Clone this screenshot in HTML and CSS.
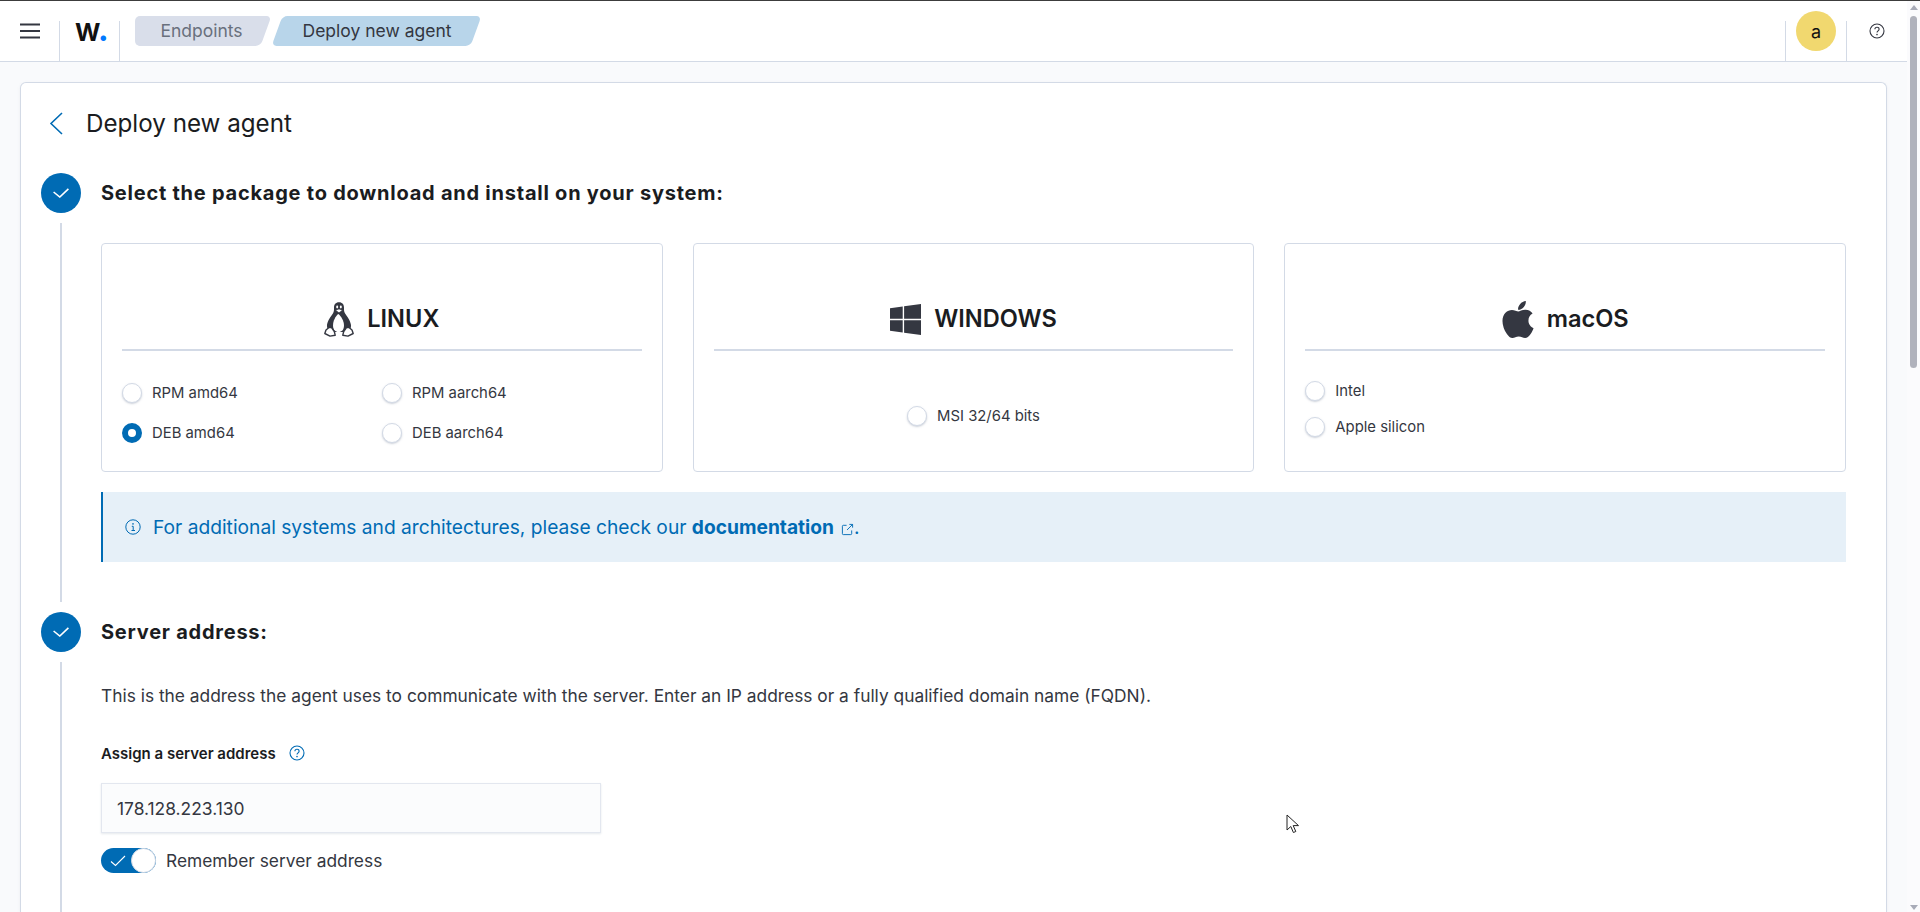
FILE: index.html
```html
<!DOCTYPE html>
<html lang="en">
<head>
<meta charset="utf-8">
<title>Deploy new agent</title>
<link rel="stylesheet" href="styles.css">
</head>
<body>
<div class="app">
  <div class="main">
    <header class="header">
      <div class="sec sec-menu">
        <svg class="ico-menu" viewBox="0 0 20 16" width="20" height="16"><path d="M0 1.5h20M0 8h20M0 14.5h20" stroke="#343741" stroke-width="2" fill="none"/></svg>
      </div>
      <div class="sec sec-logo"><span class="logo">W<span class="logo-dot">.</span></span></div>
      <nav class="crumbs">
        <span class="crumb crumb-first">Endpoints</span>
        <span class="crumb crumb-last">Deploy new agent</span>
      </nav>
      <div class="header-right">
        <div class="sec sec-avatar"><span class="avatar">a</span></div>
        <div class="sec sec-help">
          <svg viewBox="0 0 16 16" width="16" height="16" fill="none"><circle cx="8" cy="8" r="7" stroke="#343741" stroke-width="1.1"/><path d="M5.9 6.3c0-1.2 1-2 2.1-2s2.1.8 2.1 1.9c0 1.7-2.1 1.6-2.1 3.4" stroke="#343741" stroke-width="1.1"/><circle cx="8" cy="11.6" r=".8" fill="#343741"/></svg>
        </div>
      </div>
    </header>

    <main class="panel">
      <div class="title-row">
        <svg class="back" viewBox="0 0 14 23" width="14" height="23" fill="none"><path d="M13 1 2 11.5 13 22" stroke="#006bb4" stroke-width="1.6"/></svg>
        <h1 class="title">Deploy new agent</h1>
      </div>

      <section class="step">
        <div class="step-head">
          <span class="step-num"><svg viewBox="0 0 16 10" width="16" height="10" fill="none"><path d="M.6 4 6.8 9 15.4.8" stroke="#fff" stroke-width="1.6"/></svg></span>
          <h2 class="step-title">Select the package to download and install on your system:</h2>
        </div>
        <div class="step-body step-body-1">
          <div class="cards">
            <div class="card">
              <div class="card-head">
                <svg class="os-ico" viewBox="0 0 30 35" width="30" height="35">
                  <path d="M15 .3c-3.400 0-5 2.300-5 5.300 0 2.400.2 3.800-1.100 5.800C7.300 14 3.500 18.400 3 23c-.3 2.700 1 4.800 3 7h18c2-2.200 3.300-4.300 3-7-.5-4.600-4.300-9-5.900-11.600-1.300-2-1.100-3.400-1.100-5.800 0-3-1.600-5.300-5-5.300z" fill="#343741"/>
                  <path d="M14.300 12c-2.600 1.800-5.300 7-5.300 11.500 0 4.400 2.300 6.500 5.500 6.500s5.500-2.100 5.500-6.500c0-4.500-3.100-9.700-5.700-11.500z" fill="#fff"/>
                  <ellipse cx="13.200" cy="5" rx="1" ry="1.400" fill="#fff"/><ellipse cx="16.800" cy="5" rx="1" ry="1.400" fill="#fff"/>
                  <path d="M11.600 8.300 15 6.900l3.400 1.400-3.400 2.500z" fill="#fff" stroke="#343741" stroke-width=".6"/>
                  <path d="M5 25.500 2 28 .8 31.500l5.200 2.600 5.200-.9-.9-3.700L7.500 25.500z" fill="#fff" stroke="#343741" stroke-width="1.400" stroke-linejoin="round"/>
                  <path d="M25 25.500l3 2.500 1.200 3.500-5.200 2.600-5.200-.9.900-3.700L22.500 25.500z" fill="#fff" stroke="#343741" stroke-width="1.400" stroke-linejoin="round"/>
                </svg>
                <span class="os-name">LINUX</span>
              </div>
              <div class="opts opts-grid">
                <label class="opt"><span class="radio"></span>RPM amd64</label>
                <label class="opt"><span class="radio"></span>RPM aarch64</label>
                <label class="opt"><span class="radio radio-on"></span>DEB amd64</label>
                <label class="opt"><span class="radio"></span>DEB aarch64</label>
              </div>
            </div>
            <div class="card">
              <div class="card-head">
                <svg class="os-ico" viewBox="0 32 448 448" width="31" height="31"><path fill="#343741" d="M0 93.700l183.600-25.300v177.400H0V93.700zm0 324.600l183.600 25.300V268.400H0v149.900zm203.800 28L448 480V268.400H203.800v177.900zm0-380.600v180.100H448V32L203.800 65.700z"/></svg>
                <span class="os-name">WINDOWS</span>
              </div>
              <div class="opts opts-center">
                <label class="opt"><span class="radio"></span>MSI 32/64 bits</label>
              </div>
            </div>
            <div class="card">
              <div class="card-head">
                <svg class="os-ico" viewBox="0 32 384 448" width="32" height="37"><path fill="#343741" d="M318.700 268.700c-.2-36.700 16.400-64.400 50-84.800-18.800-26.900-47.200-41.700-84.700-44.600-35.500-2.800-74.300 20.700-88.500 20.700-15 0-49.400-19.700-76.400-19.700C63.300 141.200 4 184.800 4 273.500q0 39.300 14.400 81.200c12.800 36.700 59 126.700 107.200 125.200 25.200-.6 43-17.900 75.800-17.900 31.800 0 48.300 17.900 76.400 17.900 48.600-.7 90.400-82.500 102.600-119.300-65.200-30.700-61.700-90-61.700-91.900zm-56.600-164.200c27.300-32.400 24.800-61.900 24-72.500-24.100 1.400-52 16.400-67.900 34.900-17.500 19.800-27.800 44.300-25.600 71.900 26.100 2 49.900-11.400 69.500-34.300z"/></svg>
                <span class="os-name">macOS</span>
              </div>
              <div class="opts opts-col">
                <label class="opt"><span class="radio"></span>Intel</label>
                <label class="opt"><span class="radio"></span>Apple silicon</label>
              </div>
            </div>
          </div>
          <div class="callout">
            <svg class="callout-ico" viewBox="0 0 16 16" width="16" height="16" fill="none"><circle cx="8" cy="8" r="7.2" stroke="#006bb4"/><path d="M6.800 7.300H8.200V11.500M6.500 11.500H10" stroke="#006bb4"/><circle cx="8" cy="4.900" r=".8" fill="#006bb4"/></svg>
            <span>For additional systems and architectures, please check our <a class="doc-link">documentation<svg class="ext" viewBox="0 0 14 14" width="13" height="13" fill="none"><path d="M6 2.500H2.500a1 1 0 0 0-1 1V11.500a1 1 0 0 0 1 1H10.500a1 1 0 0 0 1-1V8M6.500 7.500 12.500 1.500M9 1.500h3.500V5" stroke="#006bb4"/></svg></a>.</span>
          </div>
        </div>
      </section>

      <section class="step">
        <div class="step-head">
          <span class="step-num"><svg viewBox="0 0 16 10" width="16" height="10" fill="none"><path d="M.6 4 6.8 9 15.4.8" stroke="#fff" stroke-width="1.6"/></svg></span>
          <h2 class="step-title">Server address:</h2>
        </div>
        <div class="step-body step-body-2">
          <p class="desc">This is the address the agent uses to communicate with the server. Enter an IP address or a fully qualified domain name (FQDN).</p>
          <div class="field-label">
            <span>Assign a server address</span>
            <svg viewBox="0 0 16 16" width="16" height="16" fill="none"><circle cx="8" cy="8" r="7" stroke="#006bb4" stroke-width="1.100"/><path d="M5.900 6.300c0-1.200 1-2 2.100-2s2.100.8 2.100 1.900c0 1.700-2.100 1.600-2.100 3.400" stroke="#006bb4" stroke-width="1.100"/><circle cx="8" cy="11.600" r=".8" fill="#006bb4"/></svg>
          </div>
          <div class="input">178.128.223.130</div>
          <div class="toggle-row">
            <span class="toggle">
              <svg viewBox="0 0 16 12" width="16" height="12" fill="none"><path d="M1 6.500 5.500 10.500 15 1" stroke="#fff" stroke-width="1.100"/></svg>
              <span class="knob"></span>
            </span>
            <span>Remember server address</span>
          </div>
        </div>
      </section>
    </main>
  </div>

  <aside class="scrollbar">
    <span class="sb-up"></span>
    <span class="sb-thumb"></span>
    <span class="sb-down"></span>
  </aside>
</div>
<svg class="cursor" viewBox="0 0 14 20" width="14" height="20"><path d="M1 1v15l3.800-3.500 2.600 6 2.400-1-2.600-5.900H12.500z" fill="#fff" stroke="#222" stroke-width="1"/></svg>
</body>
</html>
```
FILE: styles.css
```css
* { box-sizing: border-box; }
html, body { margin: 0; height: 912px; overflow: hidden; }
body {
  font-family: Inter, "Liberation Sans", sans-serif;
  font-size: 16px;
  color: #343741;
  background: #f9fafc;
}
.app { display: flex; height: 912px; border-top: 1px solid #3c3c3c; }
.main { flex: 1; min-width: 0; display: flex; flex-direction: column; }

.header {
  height: 61px;
  flex: none;
  display: flex;
  background: #fff;
  border-bottom: 1px solid #d3dae6;
}
.sec { align-self: flex-end; height: 40px; display: flex; align-items: center; justify-content: center; }
.sec-menu { width: 60px; border-right: 1px solid #d3dae6; padding: 0 0 20px; }
.sec-logo { width: 60px; border-right: 1px solid #d3dae6; padding: 0 0 20px; justify-content: flex-start; padding-left: 15px; }
.logo { font-size: 24.5px; font-weight: 700; color: #111; line-height: 40px; letter-spacing: -.5px; }
.logo-dot { color: #0079ff; font-size: 30px; font-weight: 800; margin-left: -2px; }

.crumbs { display: flex; gap: 3px; margin: 15px 0 0 15px; height: 30px; }
.crumb {
  position: relative;
  z-index: 0;
  display: flex;
  align-items: center;
  justify-content: center;
  font-size: 17.5px;
  height: 30px;
  line-height: 30px;
  white-space: nowrap;
}
.crumb::before {
  content: "";
  position: absolute;
  inset: 0;
  z-index: -1;
  border-radius: 5px;
  transform: skewX(-20deg);
}
.crumb-first { width: 135px; color: #69707d; padding-right: 2px; }
.crumb-first::before { background: #d9deea; left: 6px; right: 4px; }
.crumb-first::after {
  content: "";
  position: absolute;
  z-index: -1;
  inset: 0 auto 0 0;
  width: 40px;
  border-radius: 5px 0 0 5px;
  background: #d9deea;
}
.crumb-last { width: 208px; color: #343741; }
.crumb-last::before { background: #b8d5ea; left: 4px; right: 5px; }

.header-right { margin-left: auto; display: flex; align-self: flex-end; }
.sec-avatar { width: 62px; border-left: 1px solid #d3dae6; border-right: 1px solid #d3dae6; padding-bottom: 20px; }
.avatar {
  width: 40px; height: 40px;
  border-radius: 50%;
  background: #f1d86f;
  color: #111;
  display: flex; align-items: center; justify-content: center;
  font-size: 18px;
  flex: none;
}
.sec-help { width: 60px; padding-bottom: 20px; }

.panel {
  flex: 1;
  margin: 20px 20px 0;
  background: #fff;
  border: 1px solid #d3dae6;
  border-bottom: 0;
  border-radius: 6px 6px 0 0;
  padding: 0 40px 0 20px;
  overflow: hidden;
  box-shadow: 0 1px 3px rgba(152,162,179,.15);
}
.title-row { display: flex; align-items: center; height: 40px; margin-top: 20px; padding-left: 8px; gap: 23px; }
.title { margin: 2px 0 0; font-size: 24.2px; font-weight: 400; color: #1a1c21; line-height: 40px; }
.back { flex: none; }

.step-head { display: flex; align-items: center; gap: 20px; height: 40px; margin-top: 30px; }
.step + .step .step-head { margin-top: 0; }
.step-num {
  width: 40px; height: 40px; border-radius: 50%;
  background: #006bb4;
  display: flex; align-items: center; justify-content: center;
  flex: none;
}
.step-title { margin: 0; font-size: 20px; font-weight: 700; color: #1a1c21; letter-spacing: .76px; }

.step-body { margin: 10px 0 10px 19px; border-left: 2px solid #d3dae6; padding-left: 39px; }
.step-body-1 { padding-top: 20px; padding-bottom: 40px; }
.step-body-2 { padding-top: 22px; height: 300px; }

.cards { display: grid; grid-template-columns: repeat(3, 1fr); gap: 30px; }
.card {
  height: 229px;
  border: 1px solid #d3dae6;
  border-radius: 4px;
  padding: 0 20px;
  display: flex;
  flex-direction: column;
}
.card-head {
  flex: none;
  height: 107px;
  border-bottom: 2px solid #d3dae6;
  display: flex;
  align-items: center;
  justify-content: center;
  gap: 13px;
  padding-top: 45px;
}
.os-ico { flex: none; }
.os-name { font-size: 23.6px; font-weight: 600; color: #1a1c21; line-height: 30px; }
.opts { flex: 1; font-size: 14.85px; }
.opt { display: flex; align-items: center; gap: 10px; height: 20px; white-space: nowrap; color: #343741; }
.opts-grid { display: grid; grid-template-columns: 260px 1fr; grid-auto-rows: 20px; row-gap: 20px; padding-top: 32px; }
.opts-center { display: flex; justify-content: center; padding-top: 55px; }
.opts-col { display: flex; flex-direction: column; gap: 16px; padding-top: 30px; }
.radio {
  width: 20px; height: 20px; border-radius: 50%;
  background: #fff;
  border: 1px solid #d3dae6;
  box-shadow: 0 1px 2px rgba(152,162,179,.5);
  flex: none;
}
.radio-on { border: 6px solid #006bb4; box-shadow: none; }

.callout {
  margin-top: 20px;
  height: 70px;
  display: flex;
  align-items: center;
  gap: 12px;
  background: #e6f0f8;
  border-left: 2px solid #006bb4;
  padding-left: 22px;
  color: #006bb4;
  font-size: 19.2px;
}
.callout-ico { flex: none; }
.doc-link { font-weight: 700; }
.ext { margin: 0 0 -2px 7px; }

.desc { margin: 0; font-size: 17.35px; line-height: 24px; color: #343741; }
.field-label { display: flex; align-items: center; gap: 13px; margin-top: 35px; font-size: 15px; font-weight: 600; color: #1a1c21; height: 20px; }
.input {
  margin-top: 20px;
  width: 500px;
  height: 50px;
  display: flex; align-items: center;
  padding-left: 15px;
  background: #fbfcfd;
  border: 1px solid #e3e7ef;
  box-shadow: 0 1px 2px rgba(152,162,179,.25);
  font-size: 17.4px;
  color: #343741;
}
.toggle-row { display: flex; align-items: center; gap: 10px; margin-top: 15px; height: 25px; font-size: 17.35px; }
.toggle {
  position: relative;
  width: 55px; height: 25px;
  border-radius: 13px;
  background: #006bb4;
  display: flex; align-items: center;
  padding-left: 9px;
  flex: none;
}
.knob {
  position: absolute;
  right: 0; top: 0;
  width: 25px; height: 25px;
  border-radius: 50%;
  background: #fff;
  border: 1px solid #d3dae6;
}

.scrollbar { width: 13px; flex: none; background: #fbfbfd; display: flex; flex-direction: column; align-items: center; }
.sb-up { width: 0; height: 0; border: 4px solid transparent; border-top: 0; border-bottom: 5px solid #a8abb8; margin-top: 4px; }
.sb-thumb { width: 7px; height: 352px; margin-top: 6px; background: #b0b2bc; border-radius: 4px; }
.sb-down { width: 0; height: 0; border: 4px solid transparent; border-bottom: 0; border-top: 5px solid #a8abb8; margin-top: auto; margin-bottom: 2px; }

.cursor { position: absolute; left: 1286px; top: 814px; }
```
